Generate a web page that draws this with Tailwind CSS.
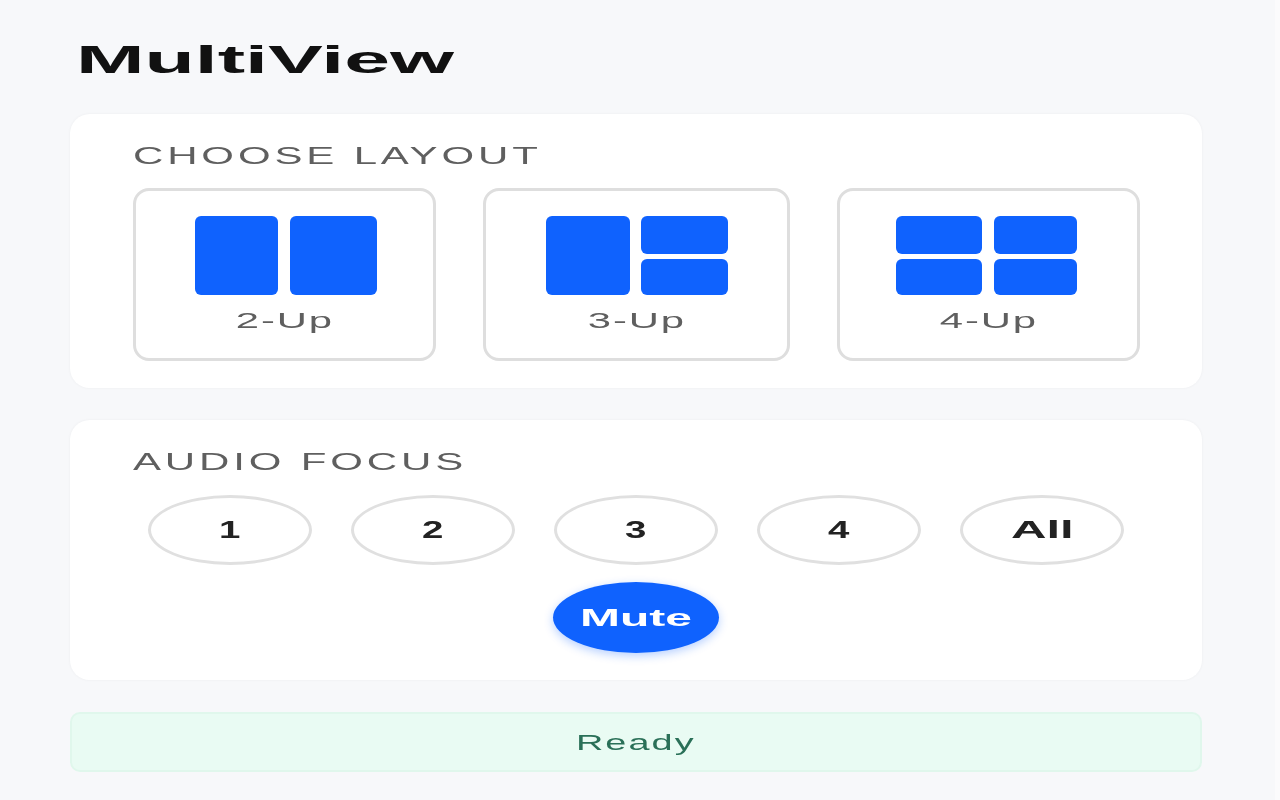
<!DOCTYPE html>
<html>
<head>
<meta charset="utf-8">
<script src="https://cdn.jsdelivr.net/npm/@tailwindcss/browser@4"></script>
</head>
<body class="m-0 bg-[#f7f8fa] font-['Liberation_Sans',Arial,sans-serif]">
<div class="w-[1280px] h-[800px] overflow-hidden flex">
  <main class="w-[1275px] pl-[70px] blur-[0.6px]">
    <div class="w-[1132px]">
      <div class="h-[114px] pt-[37px] pl-[6px]">
        <h1 class="inline-block origin-left scale-x-[2.11] text-[39px] leading-[45px] font-bold text-[#111]">MultiView</h1>
      </div>

      <section class="h-[274px] bg-white rounded-[20px] pt-[26px] pl-[63px] shadow-[0_0_3px_rgba(0,0,0,0.05)]">
        <h2 class="block origin-left scale-x-[1.75] tracking-[2.2px] text-[24px] leading-[32px] font-normal text-[#5f5f5f]">CHOOSE LAYOUT</h2>
        <div class="flex gap-[47px] mt-[16px]">
          <button class="w-[303px] h-[173px] rounded-[16px] border-[3px] border-[#dedede] bg-white flex flex-col items-center pt-[25px]">
            <div class="flex gap-[12px] w-[182px] h-[79px] ml-[2px]">
              <div class="w-[83px] bg-[#0f62fe] rounded-[6px]"></div>
              <div class="w-[87px] bg-[#0f62fe] rounded-[6px]"></div>
            </div>
            <span class="scale-x-[1.9] tracking-[1px] text-[22px] leading-[28px] mt-[12px] text-[#5f5f5f]">2-Up</span>
          </button>
          <button class="w-[307px] h-[173px] rounded-[16px] border-[3px] border-[#dedede] bg-white flex flex-col items-center pt-[25px]">
            <div class="flex gap-[11px] w-[182px] h-[79px]">
              <div class="w-[84px] bg-[#0f62fe] rounded-[6px]"></div>
              <div class="w-[87px] flex flex-col gap-[5px]">
                <div class="h-[38px] bg-[#0f62fe] rounded-[6px]"></div>
                <div class="h-[36px] bg-[#0f62fe] rounded-[6px]"></div>
              </div>
            </div>
            <span class="scale-x-[1.9] tracking-[1px] text-[22px] leading-[28px] mt-[12px] text-[#5f5f5f]">3-Up</span>
          </button>
          <button class="w-[303px] h-[173px] rounded-[16px] border-[3px] border-[#dedede] bg-white flex flex-col items-center pt-[25px]">
            <div class="grid grid-cols-[86px_83px] gap-x-[12px] gap-y-[5px] grid-rows-[38px_36px] w-[181px] h-[79px] mr-[4px]">
              <div class="bg-[#0f62fe] rounded-[6px]"></div>
              <div class="bg-[#0f62fe] rounded-[6px]"></div>
              <div class="bg-[#0f62fe] rounded-[6px]"></div>
              <div class="bg-[#0f62fe] rounded-[6px]"></div>
            </div>
            <span class="scale-x-[1.9] tracking-[1px] text-[22px] leading-[28px] mt-[12px] text-[#5f5f5f]">4-Up</span>
          </button>
        </div>
      </section>

      <section class="mt-[32px] h-[260px] bg-white rounded-[20px] pt-[26px] shadow-[0_0_3px_rgba(0,0,0,0.05)]">
        <div class="pl-[63px] h-[32px]">
          <h2 class="block origin-left scale-x-[1.75] tracking-[2.2px] text-[24px] leading-[32px] font-normal text-[#5f5f5f]">AUDIO FOCUS</h2>
        </div>
        <div class="flex flex-wrap justify-center gap-x-[39px] gap-y-[17px] mt-[17px]">
          <button class="w-[164px] h-[70px] rounded-[50%] border-[3px] border-[#e0e0e0] bg-white text-[24px] font-bold text-[#222]"><span class="inline-block scale-x-[1.6]">1</span></button>
          <button class="w-[164px] h-[70px] rounded-[50%] border-[3px] border-[#e0e0e0] bg-white text-[24px] font-bold text-[#222]"><span class="inline-block scale-x-[1.6]">2</span></button>
          <button class="w-[164px] h-[70px] rounded-[50%] border-[3px] border-[#e0e0e0] bg-white text-[24px] font-bold text-[#222]"><span class="inline-block scale-x-[1.6]">3</span></button>
          <button class="w-[164px] h-[70px] rounded-[50%] border-[3px] border-[#e0e0e0] bg-white text-[24px] font-bold text-[#222]"><span class="inline-block scale-x-[1.6]">4</span></button>
          <button class="w-[164px] h-[70px] rounded-[50%] border-[3px] border-[#e0e0e0] bg-white text-[24px] font-bold text-[#222]"><span class="inline-block scale-x-[2.05]">All</span></button>
          <button class="w-[166px] h-[71px] rounded-[50%] bg-[#0f62fe] text-[24px] font-bold text-white shadow-[0_3px_10px_rgba(15,98,254,0.3)]"><span class="inline-block scale-x-[2]">Mute</span></button>
        </div>
      </section>

      <div class="mt-[32px] h-[60px] rounded-[10px] bg-[#e9fbf3] border-2 border-[#e0f7ec] flex items-center justify-center">
        <span class="inline-block scale-x-[1.72] tracking-[1.2px] text-[22px] text-[#2a7058]">Ready</span>
      </div>
    </div>
  </main>
  <div class="w-[5px] h-full bg-[#fbfbfc]"></div>
</div>
</body>
</html>
